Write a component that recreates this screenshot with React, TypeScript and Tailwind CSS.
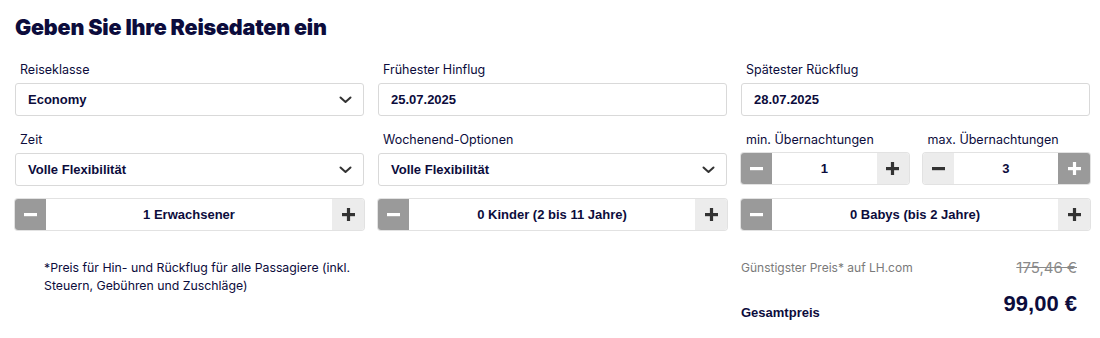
import React from 'react';

const NAVY = 'text-[#0c0c3c]';
const LABEL = `text-[12.5px] leading-4 mb-[5px] pl-[5px] ${NAVY}`;

const Chevron = () => (
  <svg width="13" height="8" viewBox="0 0 13 8" className="shrink-0">
    <path d="M1.5 1.5 L6.5 6 L11.5 1.5" fill="none" stroke="#333" strokeWidth="2" strokeLinecap="round" strokeLinejoin="round" />
  </svg>
);

const Field = ({ label, value, select }: { label: string; value: string; select?: boolean }) => (
  <div className="flex flex-col">
    <span className={LABEL}>{label}</span>
    <div className="h-[33px] flex items-center justify-between bg-white border border-[#d9d9d9] rounded-[3px] pl-[12px] pr-[11px]">
      <span className={`text-[13px] font-bold font-['Liberation_Sans',Arial,sans-serif] ${NAVY}`}>{value}</span>
      {select && <Chevron />}
    </div>
  </div>
);

const Sign = ({ plus, light }: { plus?: boolean; light?: boolean }) => (
  <svg width="13" height="13" viewBox="0 0 13 13">
    <rect x="0" y="5" width="13" height="3.2" fill={light ? '#fff' : '#333'} />
    {plus && <rect x="4.9" y="0" width="3.2" height="13" fill={light ? '#fff' : '#333'} />}
  </svg>
);

const Stepper = ({ value, minusDark = true, plusDark = false }: { value: string; minusDark?: boolean; plusDark?: boolean }) => (
  <div className="h-[31px] flex bg-white rounded-[3px] shadow-[0_0_0_1px_#e2e2e2] overflow-hidden">
    <div className={`w-[31px] flex items-center justify-center ${minusDark ? 'bg-[#9a9a9a]' : 'bg-[#ececec]'}`}>
      <Sign light={minusDark} />
    </div>
    <div className={`flex-1 flex items-center justify-center text-[13px] font-bold font-['Liberation_Sans',Arial,sans-serif] ${NAVY}`}>
      {value}
    </div>
    <div className={`w-[32px] flex items-center justify-center ${plusDark ? 'bg-[#9a9a9a]' : 'bg-[#ececec]'}`}>
      <Sign plus light={plusDark} />
    </div>
  </div>
);

export default function App() {
  return (
    <div className="w-[1100px] h-[338px] bg-white pl-[15px] pr-[10px] pt-[14px] font-['Inter','Noto_Sans',sans-serif]">
      <h1 className={`text-[21.5px] leading-[26px] font-black tracking-[-0.2px] ${NAVY}`}>Geben Sie Ihre Reisedaten ein</h1>

      <div className="grid grid-cols-3 gap-x-[14px] mt-[22px]">
        <Field label="Reiseklasse" value="Economy" select />
        <Field label="Frühester Hinflug" value="25.07.2025" />
        <Field label="Spätester Rückflug" value="28.07.2025" />
      </div>

      <div className="grid grid-cols-3 gap-x-[14px] mt-[16px]">
        <Field label="Zeit" value="Volle Flexibilität" select />
        <Field label="Wochenend-Optionen" value="Volle Flexibilität" select />
        <div className="grid grid-cols-2 gap-x-[14px]">
          <div className="flex flex-col">
            <span className={LABEL}>min. Übernachtungen</span>
            <Stepper value="1" />
          </div>
          <div className="flex flex-col">
            <span className={LABEL}>max. Übernachtungen</span>
            <Stepper value="3" minusDark={false} plusDark />
          </div>
        </div>
      </div>

      <div className="grid grid-cols-3 gap-x-[14px] mt-[13px]">
        <Stepper value="1 Erwachsener" />
        <Stepper value="0 Kinder (2 bis 11 Jahre)" />
        <Stepper value="0 Babys (bis 2 Jahre)" />
      </div>

      <div className="grid grid-cols-3 gap-x-[14px] mt-[29px]">
        <p className={`col-span-2 pl-[29px] text-[12.3px] leading-[18px] ${NAVY}`}>
          *Preis für Hin- und Rückflug für alle Passagiere (inkl.<br />Steuern, Gebühren und Zuschläge)
        </p>
        <div className="flex flex-col pr-[13px]">
          <div className="flex items-center justify-between h-[18px]">
            <span className="text-[12px] text-[#7a7a7a]">Günstigster Preis* auf LH.com</span>
            <span className="text-[15px] text-[#8a8a8a] line-through">175,46 €</span>
          </div>
          <div className="flex items-start justify-between mt-[14px]">
            <span className={`mt-[14px] leading-4 text-[13px] font-bold font-['Liberation_Sans',Arial,sans-serif] ${NAVY}`}>Gesamtpreis</span>
            <span className={`text-[22px] leading-[26px] font-bold font-['Liberation_Sans',Arial,sans-serif] ${NAVY}`}>99,00 €</span>
          </div>
        </div>
      </div>
    </div>
  );
}
